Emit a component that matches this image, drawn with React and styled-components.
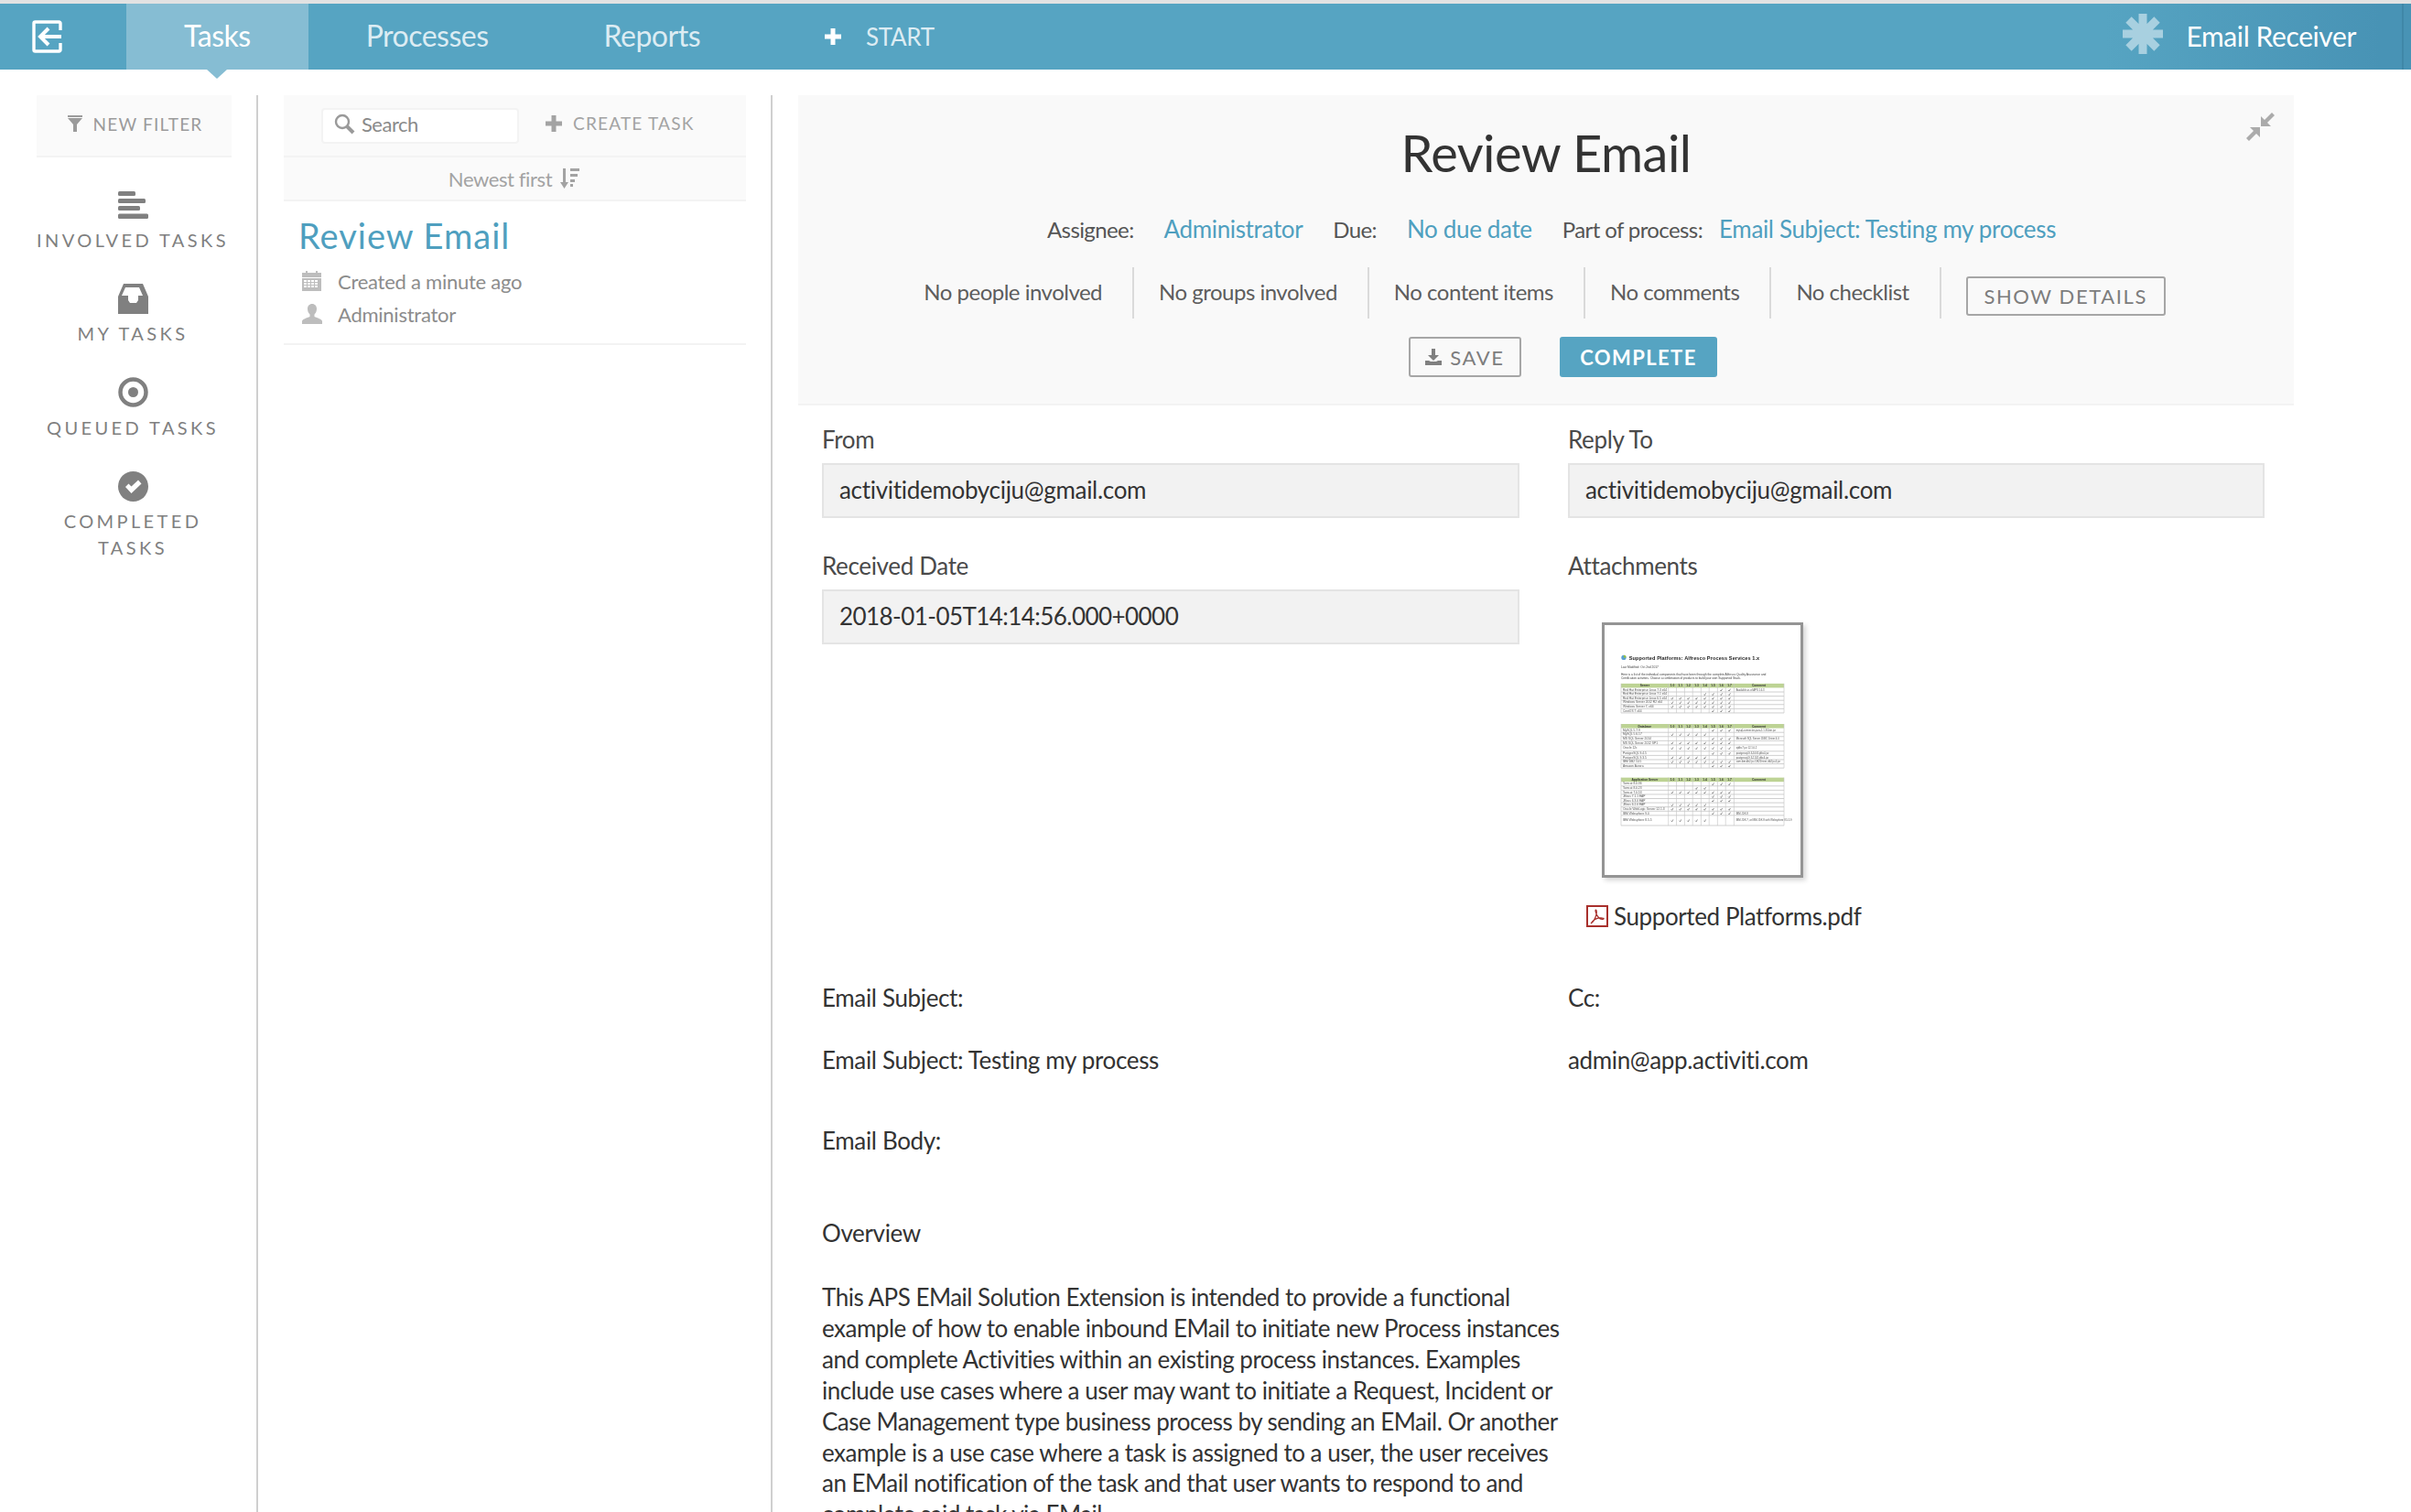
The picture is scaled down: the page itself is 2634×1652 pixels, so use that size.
import React from 'react'
import styled, { createGlobalStyle } from 'styled-components'

const GlobalStyle = createGlobalStyle`
  html, body { margin: 0; padding: 0; background: #fff; }
  body { font-family: Lato, "Open Sans", sans-serif; color: #333; }
  * { box-sizing: border-box; }
`

const Page = styled.div`
  width: 2634px;
  height: 1652px;
  overflow: hidden;
  border-top: 4px solid #e2e2e2;
`

const Nav = styled.nav`
  height: 72px;
  display: flex;
  align-items: stretch;
  background: linear-gradient(90deg, #56a4c2 0, #56a4c2 2300px, #4893b5 2600px);
  position: relative;
  color: #fff;
`

const Logo = styled.div`
  width: 138px;
  padding-left: 35px;
  display: flex;
  align-items: center;
`

const Tab = styled.a`
  display: flex;
  align-items: center;
  padding: 0 63px 3px;
  font-size: 32px;
  letter-spacing: -0.5px;
  color: ${p => (p.$active ? '#fff' : '#dcecf3')};
  background: ${p => (p.$active ? '#86bdd3' : 'transparent')};
  position: relative;
  ${p => p.$active && `
    &::after {
      content: '';
      position: absolute;
      left: 50%;
      bottom: -10px;
      margin-left: -11px;
      border-left: 11px solid transparent;
      border-right: 11px solid transparent;
      border-top: 10px solid #86bdd3;
    }
  `}
`

const Start = styled.a`
  display: flex;
  align-items: center;
  gap: 27px;
  margin-left: 73px;
  font-size: 26px;
  letter-spacing: -0.3px;
  color: #dcecf3;
`

const Tenant = styled.div`
  margin-left: auto;
  display: flex;
  align-items: center;
  gap: 26px;
  padding: 0 60px 3px 0;
  font-size: 30px;
  letter-spacing: -0.4px;
`

const EdgeLine = styled.span`
  position: absolute;
  right: 8px;
  top: 0;
  bottom: 0;
  width: 2px;
  background: #3f87a8;
`

const Body = styled.div`
  display: flex;
  height: 1576px;
  padding-top: 28px;
`

const Sidebar = styled.aside`
  width: 282px;
  padding-left: 40px;
  padding-right: 27px;
  border-right: 2px solid #cfcfcf;
  flex: none;
`

const FilterBox = styled.div`
  height: 68px;
  background: #fafafa;
  border-bottom: 2px solid #f3f3f3;
  display: flex;
  align-items: center;
  justify-content: center;
  gap: 12px;
  color: #9b9b9b;
  font-size: 19px;
  letter-spacing: 1.2px;
  padding: 0 0 4px 2px;
`

const SideList = styled.ul`
  list-style: none;
  margin: 35px 0 0 -20px;
  padding: 0;
  width: 250px;
`

const SideItem = styled.li`
  display: flex;
  flex-direction: column;
  align-items: center;
  height: 102.4px;
  color: #7f7f7f;
  font-size: 20px;
  line-height: 29px;
  letter-spacing: 3.4px;
  text-align: center;
`

const SideIcon = styled.div`
  height: 34px;
  margin-bottom: 7px;
  display: flex;
  align-items: center;
`

const ListColumn = styled.section`
  width: 562px;
  padding-left: 28px;
  padding-right: 27px;
  border-right: 2px solid #cfcfcf;
  flex: none;
`

const SearchBar = styled.div`
  height: 68px;
  background: #fafafa;
  border-bottom: 2px solid #f3f3f3;
  display: flex;
  align-items: center;
  padding-left: 41px;
`

const SearchBox = styled.div`
  width: 216px;
  height: 39px;
  background: #fff;
  border: 2px solid #f3f3f3;
  border-radius: 4px;
  display: flex;
  align-items: center;
  gap: 7px;
  padding: 0 0 3px 12px;
  color: #8a8a8a;
  font-size: 22px;
  letter-spacing: -0.5px;
`

const CreateTask = styled.a`
  display: flex;
  align-items: center;
  gap: 12px;
  margin-left: 29px;
  padding-bottom: 5px;
  color: #a3a3a3;
  font-size: 19px;
  letter-spacing: 1.2px;
`

const SortBar = styled.div`
  height: 48px;
  background: #fafafa;
  border-bottom: 2px solid #f3f3f3;
  display: flex;
  align-items: center;
  justify-content: center;
  gap: 9px;
  padding-right: 2px;
  color: #a3a3a3;
  font-size: 22px;
  letter-spacing: -0.4px;
`

const TaskCard = styled.div`
  height: 157px;
  border-bottom: 2px solid #f3f3f3;
  padding: 14px 0 0 16px;
`

const TaskTitle = styled.h3`
  margin: 0 0 9px;
  font-size: 38px;
  font-weight: 400;
  line-height: 46px;
  letter-spacing: 1px;
  color: #4f9fbf;
`

const TaskMeta = styled.div`
  display: flex;
  align-items: center;
  height: 36px;
  color: #8c8c8c;
  font-size: 22px;
  letter-spacing: -0.25px;
`

const MetaIcon = styled.span`
  width: 43px;
  padding-left: 4px;
  display: flex;
  align-items: center;
`

const Main = styled.main`
  flex: none;
  width: 1634px;
  padding-left: 28px;
`

const Header = styled.header`
  width: 1634px;
  height: 339px;
  background: #f9f9f9;
  border-bottom: 2px solid #f3f3f3;
  position: relative;
  text-align: center;
`

const Collapse = styled.a`
  position: absolute;
  right: 20px;
  top: 18px;
`

const Title = styled.h1`
  margin: 0;
  padding-top: 30px;
  font-size: 56px;
  line-height: 66px;
  font-weight: 400;
  letter-spacing: -0.5px;
  color: #333;
`

const InfoRow = styled.div`
  display: flex;
  justify-content: center;
  align-items: center;
  height: 36px;
  margin-top: 32px;
  padding-left: 12px;
  font-size: 26px;
  letter-spacing: -0.35px;
  color: #555;
`

const InfoLabel = styled.span`
  font-size: 24px;
  letter-spacing: -0.6px;
  margin-right: ${p => p.$gap}px;
`

const InfoLink = styled.a`
  color: #4f9fbf;
  margin-right: ${p => p.$gap}px;
`

const DetailRow = styled.div`
  display: flex;
  justify-content: center;
  align-items: stretch;
  height: 56px;
  margin-top: 24px;
  padding-right: 30px;
  font-size: 24px;
  letter-spacing: -0.5px;
  color: #5d5d5d;
`

const DetailItem = styled.div`
  display: flex;
  align-items: center;
  padding: 0 33px 3px 27px;
  border-right: 2px solid #dadada;
`

const OutlineButton = styled.button`
  font-family: inherit;
  font-size: 22px;
  letter-spacing: 1.6px;
  color: #7d7d7d;
  background: transparent;
  border: 2px solid #a6a6a6;
  border-radius: 3px;
  height: ${p => p.$h}px;
  width: ${p => p.$w}px;
  padding: 0;
  display: flex;
  align-items: center;
  justify-content: center;
  gap: 9px;
`

const ShowWrap = styled.div`
  display: flex;
  align-items: center;
  padding-left: 27px;
  padding-top: 6px;
`

const ActionRow = styled.div`
  display: flex;
  justify-content: center;
  gap: 42px;
  margin-top: 20px;
  padding-left: 37px;
`

const PrimaryButton = styled.button`
  font-family: inherit;
  font-size: 22px;
  font-weight: 700;
  letter-spacing: 1.4px;
  color: #fff;
  background: #56a4c2;
  border: 0;
  border-radius: 3px;
  width: 172px;
  height: 44px;
  padding: 0;
`

const Form = styled.div`
  display: grid;
  grid-template-columns: 815px 761px;
  padding: 0 0 0 26px;
`

const Field = styled.div`
  height: ${p => p.$h}px;
  padding-top: ${p => p.$top || 0}px;
`

const Label = styled.label`
  display: block;
  height: 34px;
  line-height: 34px;
  font-size: 26px;
  letter-spacing: -0.35px;
  color: #4a4a4a;
  margin-bottom: ${p => p.$mb || 0}px;
`

const Input = styled.div`
  width: ${p => p.$w}px;
  height: 60px;
  background: #f2f2f2;
  border: 2px solid #e4e4e4;
  display: flex;
  align-items: center;
  padding: 0 0 3px 17px;
  font-size: 26px;
  letter-spacing: ${p => p.$spacing}px;
  color: #333;
`

const Thumb = styled.div`
  width: 220px;
  height: 279px;
  margin: 45px 0 0 37px;
  border: 3px solid #949494;
  background: #fff;
  box-shadow: 3px 3px 5px rgba(0, 0, 0, 0.16);
  overflow: hidden;
`

const FileName = styled.div`
  display: flex;
  align-items: center;
  gap: 6px;
  margin: 26px 0 0 20px;
  font-size: 26px;
  letter-spacing: -0.4px;
  color: #333;
`

const TextLine = styled.div`
  height: 34px;
  line-height: 34px;
  font-size: 26px;
  letter-spacing: -0.35px;
  color: #333;
  white-space: nowrap;
  margin-top: ${p => p.$top || 0}px;
`

const Overview = styled.p`
  margin: 37px 0 0;
  font-size: 26px;
  line-height: 33.9px;
  letter-spacing: -0.5px;
  color: #333;
  white-space: nowrap;
`

/* icons */

const LogoutIcon = () => (
  <svg width="34" height="36" viewBox="0 0 34 36" fill="none" stroke="#fff" strokeWidth="3.4">
    <path d="M31 11V3.500a1.500 1.500 0 0 0-1.500-1.500H3.500A1.500 1.500 0 0 0 2 3.500v29A1.500 1.500 0 0 0 3.500 34h26a1.500 1.500 0 0 0 1.500-1.500V25" />
    <path d="M32 18H10M18 9l-9 9 9 9" strokeWidth="4" />
  </svg>
)

const PlusIcon = ({ size = 18, color = '#fff' }) => (
  <svg width={size} height={size} viewBox="0 0 18 18" fill={color}>
    <path d="M6.500 0h5v6.500H18v5h-6.500V18h-5v-6.500H0v-5h6.500z" />
  </svg>
)

const AsteriskIcon = () => (
  <svg width="44" height="44" viewBox="0 0 44 44" stroke="#a8d0e0" strokeWidth="9" style={{ marginBottom: 4 }}>
    <path d="M22 0v44M0 22h44M6.500 6.500l31 31M37.500 6.500l-31 31" />
  </svg>
)

const FilterIcon = () => (
  <svg width="16" height="18" viewBox="0 0 16 18" fill="#9b9b9b">
    <path d="M0 0h16v2H0zM0 3h16l-6 7v8H6v-8z" />
  </svg>
)

const SearchIcon = () => (
  <svg width="23" height="23" viewBox="0 0 23 23" fill="none" stroke="#9a9a9a">
    <circle cx="9" cy="9" r="7" strokeWidth="2.400" />
    <path d="M14 14l7 7" strokeWidth="4" />
  </svg>
)

const SortIcon = () => (
  <svg width="21" height="22" viewBox="0 0 21 22" fill="#a3a3a3">
    <path d="M3 0h3v15h3l-4.500 7L0 15h3zM11 0h10v3H11zM11 6h8v3h-8zM11 12h5v3h-5zM11 17h3v3h-3z" />
  </svg>
)

const CalendarIcon = () => (
  <svg width="21" height="22" viewBox="0 0 21 22" fill="#bdbdbd">
    <path d="M4 0h2v2h9V0h2v2h4v5H0V2h4z" />
    <path fillRule="evenodd" d="M0 8h21v14H0zM2 10v2h3v-2zm4 0v2h3v-2zm4 0v2h3v-2zm4 0v2h3v-2zM2 13v2h3v-2zm4 0v2h3v-2zm4 0v2h3v-2zm4 0v2h3v-2zM2 16v2h3v-2zm4 0v2h3v-2zm4 0v2h3v-2zm4 0v2h3v-2z" />
  </svg>
)

const UserIcon = () => (
  <svg width="22" height="22" viewBox="0 0 22 22" fill="#bdbdbd">
    <path d="M11 0c3 0 5 2.300 5 5.500 0 2.500-1 4.500-2.500 6v2.500c3 1 8.500 3 8.500 5v3H0v-3c0-2 5.500-4 8.500-5v-2.500C7 10 6 8 6 5.500 6 2.300 8 0 11 0z" />
  </svg>
)

const InvolvedIcon = () => (
  <svg width="33" height="30" viewBox="0 0 33 30" fill="#808080">
    <rect x="0" y="0" width="19" height="5" rx="1.500" />
    <rect x="0" y="8" width="30" height="5" rx="1.500" />
    <rect x="0" y="16" width="24" height="5" rx="1.500" />
    <rect x="0" y="24.500" width="33" height="5.500" rx="1.500" />
  </svg>
)

const InboxIcon = () => (
  <svg width="33" height="33" viewBox="0 0 33 33" fill="#808080">
    <path fillRule="evenodd" d="M6 0h21l6 14v19H0V14zM8 4l-4 9h7v5l2 3h7l2-3v-5h5l-4-9z" />
  </svg>
)

const TargetIcon = () => (
  <svg width="33" height="33" viewBox="0 0 33 33" fill="none">
    <circle cx="16.500" cy="16.500" r="14" stroke="#808080" strokeWidth="4.500" />
    <circle cx="16.500" cy="16.500" r="5.500" fill="#808080" />
  </svg>
)

const CheckIcon = () => (
  <svg width="33" height="33" viewBox="0 0 33 33">
    <circle cx="16.500" cy="16.500" r="16.500" fill="#808080" />
    <path d="M8 17l3.500-3.500 3 3L22 9.500l3.500 4L14.500 24z" fill="#fff" />
  </svg>
)

const SaveIcon = () => (
  <svg width="18" height="18" viewBox="0 0 18 18" fill="#808080">
    <path d="M7 0h4v7h4l-6 6-6-6h4zM0 13h4l2 1h6l2-1h4v5H0z" />
  </svg>
)

const CollapseIcon = () => (
  <svg width="32" height="32" viewBox="14 13 32 32" fill="#ababab">
    <path d="M30 18v11h11l-4-4 8-8-3-3-8 8zM29 41V30H18l4 4-8 8 3 3 8-8z" />
  </svg>
)

const PdfIcon = () => (
  <svg width="24" height="24" viewBox="0 0 24 24" fill="none">
    <rect x="1" y="1" width="22" height="22" stroke="#a8302c" strokeWidth="2" fill="#fff" />
    <path d="M5 20c3-2 5-6 6-10 .5-2 .4-5-.6-5-1 0 0 5 2.600 8 1.600 1.800 4 3 6 2 .8-1-3-1.400-6-.8-3 .6-6 3-8 5.800z" stroke="#a8302c" strokeWidth="1.200" />
  </svg>
)

/* pdf preview, coordinates taken from the attachment thumbnail */

const COLS = [366, 393, 420, 447, 475, 502, 530, 557, 585]
const OLD = [0, 1, 2, 3, 4]
const NEW = [5, 6, 7]
const ALL = [0, 1, 2, 3, 4, 5, 6, 7]

const TABLES = [
  {
    top: 317,
    head: 'Server',
    rows: [
      ['Red Hat Enterprise Linux 7.3 x64', [6, 7], 14, 'Available as of APS 1.6.3'],
      ['Red Hat Enterprise Linux 7.1 x64', [4, 5, 6, 7], 14],
      ['Red Hat Enterprise Linux 6.5 x64', ALL, 14],
      ['Windows Server 2012 R2 x64', ALL, 14],
      ['Windows Server 7, x64', ALL, 14],
      ['CentOS 7 x64', NEW, 14],
    ],
  },
  {
    top: 452,
    head: 'Database',
    rows: [
      ['MySQL 5.7.9', NEW, 14, 'mysql-connector-java-5.1.33-bin.jar'],
      ['MySQL 5.6.17', OLD, 14],
      ['MS SQL Server 2014', NEW, 14, 'Microsoft SQL Server JDBC Driver 4.0'],
      ['MS SQL Server 2012 SP1', ALL, 14],
      ['Oracle 12c', ALL, 21, 'ojdbc7.jar 12.1.0.2'],
      ['PostgreSQL 9.4.5', NEW, 14, 'postgresql-9.3-1005.jdbc4.jar'],
      ['PostgreSQL 9.3.5', OLD, 14, 'postgresql-9.3-1102.jdbc4.jar'],
      ['IBM DB2 10.5', ALL, 14, 'com.ibm.db2.jcc.DB2Driver, db2jcc4.jar'],
      ['Amazon Aurora', NEW, 14],
    ],
  },
  {
    top: 631,
    head: 'Application Server',
    rows: [
      ['Tomcat 8.0.36', NEW, 14],
      ['Tomcat 8.0.23', [3, 4], 14],
      ['Tomcat 7.0.53', ALL, 14],
      ['JBoss 7.1.1 EAP', NEW, 14],
      ['JBoss 6.3.0 EAP', NEW, 14],
      ['JBoss 6.2.0 EAP', OLD, 14],
      ['Oracle WebLogic Server 12.1.3', ALL, 14],
      ['IBM Websphere 9.0', NEW, 14, 'IBM JDK 8'],
      ['IBM Websphere 8.5.5', OLD, 34, 'IBM JDK 7, or IBM JDK 8 with Websphere 8.5.5.9'],
    ],
  },
]

const VERSIONS = ['1.0', '1.1', '1.2', '1.3', '1.4', '1.5', '1.6', '1.7']

const DocTable = ({ table }) => {
  const height = table.rows.reduce((sum, r) => sum + r[2], 14)
  let y = table.top + 14
  return (
    <g fontFamily="Liberation Sans, sans-serif" fontSize="10" fill="#555">
      <rect x="208" y={table.top} width="544" height="14" fill="#bdd394" />
      <text x="287" y={table.top + 11} textAnchor="middle" fontWeight="700" fill="#333">{table.head}</text>
      <text x="668" y={table.top + 11} textAnchor="middle" fontWeight="700" fill="#333">Comment</text>
      {VERSIONS.map((v, i) => (
        <text key={v} x={COLS[i] + 13} y={table.top + 11} textAnchor="middle" fontWeight="700" fill="#333">{v}</text>
      ))}
      {table.rows.map(([name, checks, h, note]) => {
        const rowY = y
        y += h
        const mid = rowY + h / 2 + 3
        return (
          <g key={name}>
            <text x="214" y={mid}>{name}</text>
            {note && <text x="592" y={mid} fontSize="8.500">{note}</text>}
            {checks.map(c => (
              <path key={c} d={`M${COLS[c] + 9} ${mid - 2}l3 3 4-7`} fill="none" stroke="#444" strokeWidth="1.800" />
            ))}
            <path d={`M208 ${rowY + h}H752`} stroke="#b5b5b5" strokeWidth="2" />
          </g>
        )
      })}
      {[208, ...COLS, 752].map(x => (
        <path key={x} d={`M${x} ${table.top}V${table.top + height}`} stroke="#c4c4c4" strokeWidth="2" />
      ))}
    </g>
  )
}

const DocPreview = () => (
  <svg width="214" height="273" viewBox="153 123 654 832" style={{ display: 'block' }}>
    <defs>
      <filter id="soft"><feGaussianBlur stdDeviation="0.8" /></filter>
    </defs>
    <g filter="url(#soft)">
      <circle cx="217" cy="230" r="8" fill="#5aa0d0" />
      <path d="M217 222a8 8 0 0 1 8 8h-8z" fill="#9bc23c" />
      <text x="235" y="239" fontFamily="Liberation Sans, sans-serif" fontSize="17" fontWeight="700" fill="#222" textLength="435">Supported Platforms: Alfresco Process Services 1.x</text>
      <g fontFamily="Liberation Sans, sans-serif" fontSize="10" fill="#444">
        <text x="208" y="266">Last Modified: Oct 2nd 2017</text>
        <text x="208" y="291" textLength="484">Here is a list of the individual components that have been through the complete Alfresco Quality Assurance and</text>
        <text x="208" y="302" textLength="400">Certification activities. Choose a combination of products to build your own Supported Stack.</text>
      </g>
      {TABLES.map(t => <DocTable key={t.head} table={t} />)}
    </g>
  </svg>
)

const SIDE_ITEMS = [
  { icon: <InvolvedIcon />, label: 'INVOLVED TASKS' },
  { icon: <InboxIcon />, label: 'MY TASKS' },
  { icon: <TargetIcon />, label: 'QUEUED TASKS' },
  { icon: <CheckIcon />, label: <>COMPLETED<br />TASKS</> },
]

const PARAGRAPH = [
  'This APS EMail Solution Extension is intended to provide a functional',
  'example of how to enable inbound EMail to initiate new Process instances',
  'and complete Activities within an existing process instances. Examples',
  'include use cases where a user may want to initiate a Request, Incident or',
  'Case Management type business process by sending an EMail. Or another',
  'example is a use case where a task is assigned to a user, the user receives',
  'an EMail notification of the task and that user wants to respond to and',
  'complete said task via EMail.',
]

export default function App() {
  return (
    <Page>
      <GlobalStyle />
      <Nav>
        <Logo><LogoutIcon /></Logo>
        <Tab $active>Tasks</Tab>
        <Tab>Processes</Tab>
        <Tab>Reports</Tab>
        <Start><PlusIcon />START</Start>
        <Tenant><AsteriskIcon />Email Receiver</Tenant>
        <EdgeLine />
      </Nav>
      <Body>
        <Sidebar>
          <FilterBox><FilterIcon />NEW FILTER</FilterBox>
          <SideList>
            {SIDE_ITEMS.map((item, i) => (
              <SideItem key={i}>
                <SideIcon>{item.icon}</SideIcon>
                <span>{item.label}</span>
              </SideItem>
            ))}
          </SideList>
        </Sidebar>
        <ListColumn>
          <SearchBar>
            <SearchBox><SearchIcon />Search</SearchBox>
            <CreateTask><PlusIcon color="#a3a3a3" />CREATE TASK</CreateTask>
          </SearchBar>
          <SortBar>Newest first<SortIcon /></SortBar>
          <TaskCard>
            <TaskTitle>Review Email</TaskTitle>
            <TaskMeta><MetaIcon><CalendarIcon /></MetaIcon>Created a minute ago</TaskMeta>
            <TaskMeta><MetaIcon><UserIcon /></MetaIcon>Administrator</TaskMeta>
          </TaskCard>
        </ListColumn>
        <Main>
          <Header>
            <Collapse><CollapseIcon /></Collapse>
            <Title>Review Email</Title>
            <InfoRow>
              <InfoLabel $gap={33}>Assignee:</InfoLabel>
              <InfoLink $gap={33}>Administrator</InfoLink>
              <InfoLabel $gap={33}>Due:</InfoLabel>
              <InfoLink $gap={33}>No due date</InfoLink>
              <InfoLabel $gap={18}>Part of process:</InfoLabel>
              <InfoLink $gap={0}>Email Subject: Testing my process</InfoLink>
            </InfoRow>
            <DetailRow>
              <DetailItem>No people involved</DetailItem>
              <DetailItem>No groups involved</DetailItem>
              <DetailItem>No content items</DetailItem>
              <DetailItem>No comments</DetailItem>
              <DetailItem>No checklist</DetailItem>
              <ShowWrap><OutlineButton $w={218} $h={43}>SHOW DETAILS</OutlineButton></ShowWrap>
            </DetailRow>
            <ActionRow>
              <OutlineButton $w={123} $h={44}><SaveIcon />SAVE</OutlineButton>
              <PrimaryButton>COMPLETE</PrimaryButton>
            </ActionRow>
          </Header>
          <Form>
            <Field $h={158} $top={20}>
              <Label $mb={9}>From</Label>
              <Input $w={762} $spacing={-0.3}>activitidemobyciju@gmail.com</Input>
            </Field>
            <Field $h={158} $top={20}>
              <Label $mb={9}>Reply To</Label>
              <Input $w={761} $spacing={-0.3}>activitidemobyciju@gmail.com</Input>
            </Field>
            <Field $h={472}>
              <Label $mb={9}>Received Date</Label>
              <Input $w={762} $spacing={-0.55}>2018-01-05T14:14:56.000+0000</Input>
            </Field>
            <Field $h={472}>
              <Label>Attachments</Label>
              <Thumb><DocPreview /></Thumb>
              <FileName><PdfIcon />Supported Platforms.pdf</FileName>
            </Field>
            <Field $h={88}>
              <TextLine>Email Subject:</TextLine>
              <TextLine $top={34}>Email Subject: Testing my process</TextLine>
            </Field>
            <Field $h={88}>
              <TextLine>Cc:</TextLine>
              <TextLine $top={34}>admin@app.activiti.com</TextLine>
            </Field>
          </Form>
          <Form>
            <div>
              <TextLine $top={68}>Email Body:</TextLine>
              <TextLine $top={67}>Overview</TextLine>
              <Overview>
                {PARAGRAPH.map(line => <React.Fragment key={line}>{line}<br /></React.Fragment>)}
              </Overview>
            </div>
          </Form>
        </Main>
      </Body>
    </Page>
  )
}
